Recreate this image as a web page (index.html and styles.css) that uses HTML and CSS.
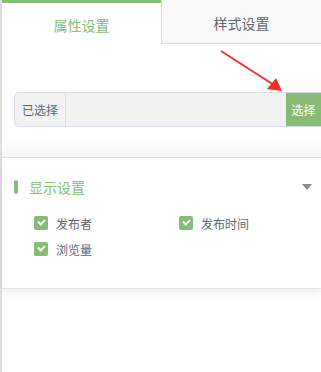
FILE: index.html
```html
<!DOCTYPE html>
<html lang="zh-CN">
<head>
    <meta charset="UTF-8">
    <meta name="viewport" content="width=device-width, initial-scale=1.0">
    <title>设置</title>
    <link rel="stylesheet" href="styles.css">
</head>
<body>
    <div class="side-panel">
        <!-- Tabs -->
        <div class="tabs">
            <div class="tab active">属性设置</div>
            <div class="tab">样式设置</div>
        </div>

        <!-- Select Box -->
        <div class="select-area">
            <div class="input-group">
                <span class="addon">已选择</span>
                <input type="text" class="select-input">
                <button class="select-btn">选择</button>
            </div>
            <svg class="hint-arrow" width="70" height="50" viewBox="0 0 70 50">
                <line x1="2" y1="2" x2="55" y2="36" stroke="#f0302c" stroke-width="2"/>
                <polygon points="63,42 48,40 57,29" fill="#f0302c"/>
            </svg>
        </div>

        <!-- Display Settings -->
        <div class="section">
            <div class="section-head">
                <span class="bar"></span>
                <span class="section-title">显示设置</span>
                <span class="caret"></span>
            </div>
            <div class="options">
                <label class="option"><span class="check"></span>发布者</label>
                <label class="option"><span class="check"></span>发布时间</label>
                <label class="option"><span class="check"></span>浏览量</label>
            </div>
        </div>
    </div>
</body>
</html>
```

FILE: styles.css
```css
* {
    box-sizing: border-box;
    margin: 0;
    padding: 0;
    font-family: "Liberation Sans", "Noto Sans CJK SC", sans-serif;
}

body {
    background: #fff;
    width: 321px;
    height: 372px;
    overflow: hidden;
}

.side-panel {
    height: 372px;
    border-left: 2px solid #dedede;
    position: relative;
}

/* Tabs */
.tabs {
    display: flex;
    height: 44px;
}

.tab {
    flex: 1;
    display: flex;
    align-items: center;
    justify-content: center;
    padding-top: 2px;
    font-size: 14px;
    color: #5f6670;
    background: #f9f9f9;
    border-left: 1px solid #dcdcdc;
    border-bottom: 1px solid #dcdcdc;
}

.tab.active {
    flex: 0 0 159px;
    color: #86bc75;
    background: #fff;
    border: none;
    border-top: 3px solid #86bc75;
}

/* Select Box */
.select-area {
    position: relative;
    padding: 48px 0 30px 12px;
    background: linear-gradient(to bottom, #fff 85%, #f6f6f6);
    border-bottom: 1px solid #e0e0e0;
}

.input-group {
    display: flex;
    height: 35px;
    border: 1px solid #d9dde5;
    border-right: none;
    border-radius: 5px 0 0 5px;
    background: #f2f2f2;
    overflow: hidden;
}

.addon {
    width: 51px;
    display: flex;
    align-items: center;
    justify-content: center;
    font-size: 12px;
    color: #5f6670;
    border-right: 1px solid #d9dde5;
}

.select-input {
    flex: 1;
    border: none;
    background: transparent;
    outline: none;
}

.select-btn {
    width: 35px;
    border: none;
    background: #86bc75;
    color: #fff;
    font-size: 12px;
    margin: -1px 0;
}

.hint-arrow {
    position: absolute;
    left: 217px;
    top: 5px;
}

/* Display Settings */
.section {
    height: 131px;
    padding: 20px 0 0 12px;
    box-shadow: 0 3px 8px rgba(0, 0, 0, 0.08);
    border-bottom: 1px solid #e4e4e8;
}

.section-head {
    display: flex;
    align-items: center;
    height: 18px;
}

.bar {
    width: 4px;
    height: 14px;
    border-radius: 2px;
    background: #86bc75;
}

.section-title {
    margin-left: 11px;
    font-size: 14px;
    color: #86bc75;
}

.caret {
    margin-left: auto;
    margin-right: 9px;
    border-left: 5px solid transparent;
    border-right: 5px solid transparent;
    border-top: 6px solid #8a8a8a;
}

.options {
    display: grid;
    grid-template-columns: 145px 1fr;
    row-gap: 12px;
    padding: 20px 0 0 20px;
}

.option {
    display: flex;
    align-items: center;
    font-size: 12px;
    color: #5f6670;
    height: 14px;
}

.check {
    width: 14px;
    height: 14px;
    margin-right: 8px;
    border-radius: 2px;
    background: #86bc75;
    position: relative;
}

.check::after {
    content: "";
    position: absolute;
    left: 4px;
    top: 3px;
    width: 5px;
    height: 3px;
    border-left: 2px solid #fff;
    border-bottom: 2px solid #fff;
    transform: rotate(-45deg);
}
```
